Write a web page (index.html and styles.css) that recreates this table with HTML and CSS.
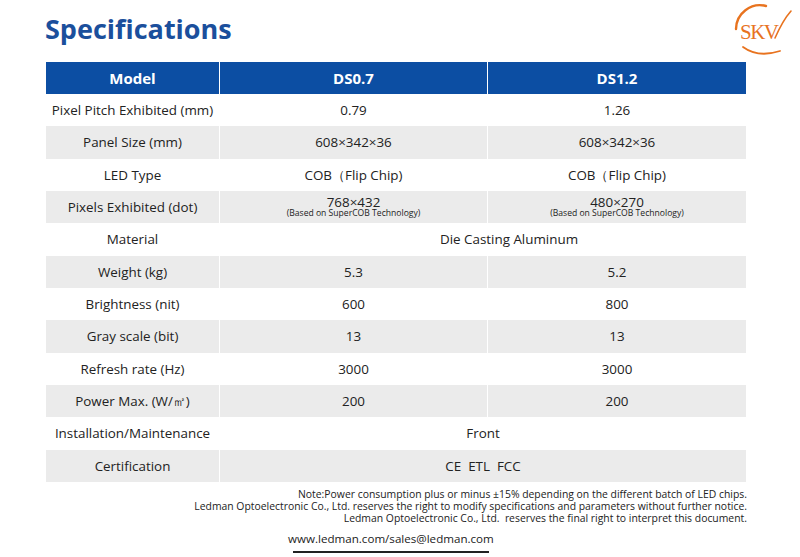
FILE: index.html
```html
<!DOCTYPE html>
<html lang="en">
<head>
<meta charset="utf-8">
<title>Specifications</title>
<link rel="stylesheet" href="styles.css">
</head>
<body>
<div class="page">
  <div class="top">
    <h1 class="title">Specifications</h1>
    <svg class="logo" viewBox="0 0 60 56" aria-label="SKV">
      <path d="M4 27 A24 24 0 0 1 34 4" fill="none" stroke="#e8731f" stroke-width="2.4" stroke-linecap="round"/>
      <path d="M11 45 Q26 56 48 49" fill="none" stroke="#e8731f" stroke-width="1.8" stroke-linecap="round"/>
      <text x="8" y="37" class="logo-text">SKV</text>
      <path d="M43 36 Q51 18 59 9" fill="none" stroke="#e8731f" stroke-width="1.6" stroke-linecap="round"/>
    </svg>
  </div>

  <div class="spec">
    <div class="c h">Model</div><div class="c h">DS0.7</div><div class="c h">DS1.2</div>

    <div class="c">Pixel Pitch Exhibited (mm)</div><div class="c">0.79</div><div class="c">1.26</div>

    <div class="c g">Panel Size (mm)</div><div class="c g">608×342×36</div><div class="c g">608×342×36</div>

    <div class="c">LED Type</div><div class="c">COB（Flip Chip)</div><div class="c">COB（Flip Chip)</div>

    <div class="c g">Pixels Exhibited (dot)</div>
    <div class="c g"><span class="big">768×432</span><span class="small">(Based on SuperCOB Technology)</span></div>
    <div class="c g"><span class="big">480×270</span><span class="small">(Based on SuperCOB Technology)</span></div>

    <div class="c">Material</div><div class="c span2 shift">Die Casting Aluminum</div>

    <div class="c g">Weight (kg)</div><div class="c g">5.3</div><div class="c g">5.2</div>

    <div class="c">Brightness (nit)</div><div class="c">600</div><div class="c">800</div>

    <div class="c g">Gray scale (bit)</div><div class="c g">13</div><div class="c g">13</div>

    <div class="c">Refresh rate (Hz)</div><div class="c">3000</div><div class="c">3000</div>

    <div class="c g">Power Max. (W/㎡)</div><div class="c g">200</div><div class="c g">200</div>

    <div class="c">Installation/Maintenance</div><div class="c span2">Front</div>

    <div class="c g">Certification</div><div class="c g span2">CE&nbsp; ETL&nbsp; FCC</div>
  </div>

  <div class="notes">
    <p>Note:Power consumption plus or minus ±15% depending on the different batch of LED chips.</p>
    <p>Ledman Optoelectronic Co., Ltd. reserves the right to modify specifications and parameters without further notice.</p>
    <p>Ledman Optoelectronic Co., Ltd.&nbsp; reserves the final right to interpret this document.</p>
  </div>

  <div class="web">www.ledman.com/sales@ledman.com</div>
  <div class="rule"></div>
</div>
</body>
</html>
```

FILE: styles.css
```css
* { box-sizing: border-box; }

html, body {
  margin: 0;
  padding: 0;
  background: #fff;
}

body {
  width: 800px;
  height: 557px;
  overflow: hidden;
  font-family: "Open Sans", "Noto Sans", sans-serif;
  color: #222;
}

.page {
  padding: 0 8px 0 46px;
}

.top {
  display: flex;
  justify-content: space-between;
  align-items: flex-start;
  height: 62px;
}

.title {
  margin: 9px 0 0 -1px;
  font-size: 27px;
  line-height: 40px;
  font-weight: 700;
  color: #1b4f9c;
}

.logo {
  width: 60px;
  height: 56px;
  margin-top: 2px;
}

.logo-text {
  font-family: "Liberation Serif", "DejaVu Serif", serif;
  font-size: 21px;
  fill: #e8731f;
  letter-spacing: -1.5px;
}

.spec {
  display: grid;
  grid-template-columns: 173px 267px 258px;
  grid-template-rows: 32px;
  grid-auto-rows: 32.33px;
  column-gap: 1px;
  width: 700px;
  font-size: 13.4px;
}

.c {
  display: flex;
  flex-direction: column;
  align-items: center;
  justify-content: center;
  text-align: center;
  white-space: nowrap;
  line-height: 1.2;
}

.h {
  background: #0c4ea3;
  color: #fff;
  font-weight: 700;
  font-size: 15px;
}

.g {
  background: #ebebeb;
}

.span2 {
  grid-column: span 2;
}

.shift {
  padding-left: 52px;
}

.big {
  font-size: 13.4px;
  line-height: 18px;
  margin-top: -2px;
}

.small {
  font-size: 8.6px;
  line-height: 11px;
  margin-top: -3px;
}

.notes {
  width: 701px;
  margin-top: 6px;
  text-align: right;
  font-size: 10.4px;
  line-height: 12px;
}

.notes p {
  margin: 0;
}

.web {
  margin: 7px 0 0 242px;
  font-size: 11.6px;
  line-height: 16px;
}

.rule {
  width: 196px;
  height: 2px;
  margin: 4px 0 0 247px;
  background: #222;
}
```
